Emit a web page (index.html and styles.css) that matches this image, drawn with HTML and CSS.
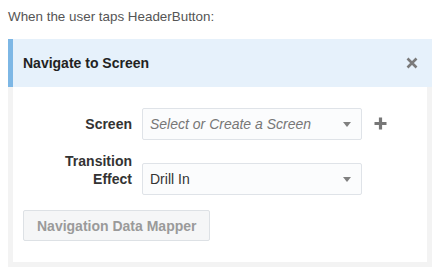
FILE: index.html
```html
<!DOCTYPE html>
<html lang="en">
<head>
  <meta charset="UTF-8" />
  <title>Navigate to Screen</title>
  <link rel="stylesheet" href="styles.css">
</head>
<body>
  <div class="trigger">When the user taps HeaderButton:</div>

  <div class="panel">
    <div class="panel-header">
      <span class="panel-title">Navigate to Screen</span>
      <svg class="close" width="12" height="12" viewBox="0 0 12 12">
        <path d="M1.5 1.5 L10.5 10.5 M10.5 1.5 L1.5 10.5" stroke="#7a7a7a" stroke-width="2.6" />
      </svg>
    </div>

    <div class="panel-body">
      <div class="row">
        <label class="label">Screen</label>
        <div class="select placeholder">
          <span>Select or Create a Screen</span>
          <span class="arrow"></span>
        </div>
        <svg class="add" width="13" height="13" viewBox="0 0 13 13">
          <path d="M6.5 0.5 V12.5 M0.5 6.5 H12.5" stroke="#777" stroke-width="3.2" />
        </svg>
      </div>

      <div class="row">
        <label class="label">Transition<br>Effect</label>
        <div class="select">
          <span>Drill In</span>
          <span class="arrow"></span>
        </div>
      </div>

      <button class="mapper" disabled>Navigation Data Mapper</button>
    </div>
  </div>
</body>
</html>
```

FILE: styles.css
```css
html, body {
  margin: 0;
  padding: 0;
  background: #fff;
  font-family: "Liberation Sans", Arial, sans-serif;
}
body {
  padding: 8px;
}
.trigger {
  font-size: 13.4px;
  line-height: 17px;
  color: #555;
  margin-bottom: 14px;
}
.panel {
  width: 414px;
  background: #f3f3f3;
  padding: 0 5px 5px 5px;
}
.panel-header {
  display: flex;
  align-items: center;
  justify-content: space-between;
  height: 48px;
  margin: 0 -5px;
  padding: 0 14px 0 10px;
  background: #e6f1fb;
  border-left: 5px solid #7db7e5;
}
.panel-title {
  font-size: 14px;
  font-weight: bold;
  color: #222;
}
.close {
  display: block;
}
.panel-body {
  background: #fff;
  padding: 21px 10px 21px 10px;
}
.row {
  display: flex;
  align-items: flex-end;
  margin-bottom: 12px;
}
.row:last-of-type {
  margin-bottom: 15px;
}
.label {
  width: 109px;
  text-align: right;
  font-size: 14px;
  font-weight: bold;
  line-height: 18px;
  color: #333;
  padding-bottom: 7px;
}
.select {
  display: flex;
  align-items: center;
  justify-content: space-between;
  box-sizing: border-box;
  width: 220px;
  height: 32px;
  margin-left: 10px;
  padding: 0 10px 0 7px;
  background: #fbfcfd;
  border: 1px solid #dfe3e8;
  border-radius: 2px;
  font-size: 14px;
  color: #333;
}
.placeholder {
  font-style: italic;
  color: #777;
}
.arrow {
  width: 0;
  height: 0;
  border-left: 4px solid transparent;
  border-right: 4px solid transparent;
  border-top: 5px solid #808080;
}
.add {
  display: block;
  margin: 0 0 10px 12px;
}
.mapper {
  box-sizing: border-box;
  height: 31px;
  padding: 0 13px;
  background: #f5f6f7;
  border: 1px solid #dde1e5;
  border-radius: 2px;
  font-family: "Liberation Sans", Arial, sans-serif;
  font-size: 14px;
  font-weight: bold;
  color: #9a9a9a;
}
```
